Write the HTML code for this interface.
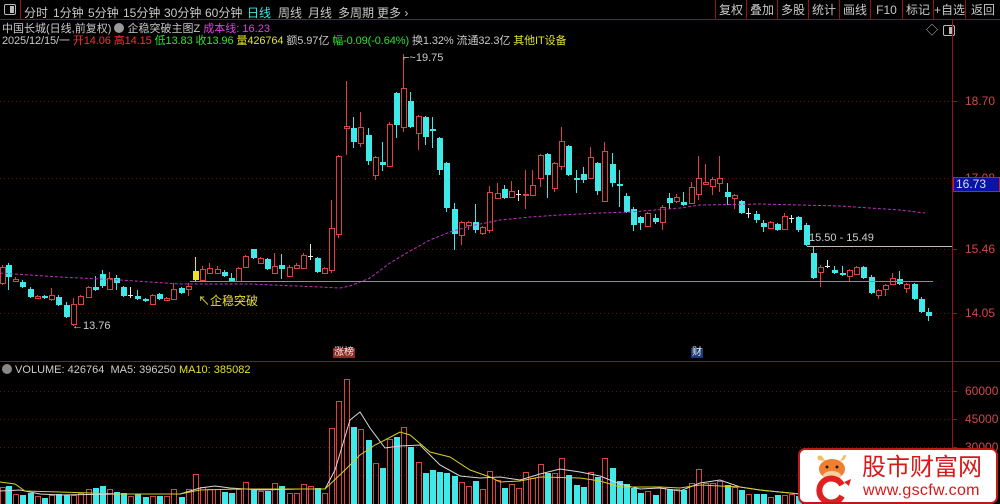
<!DOCTYPE html>
<html><head><meta charset="utf-8"><style>
*{margin:0;padding:0;box-sizing:border-box}
body{width:1000px;height:504px;background:#000;overflow:hidden;position:relative;font-family:"Liberation Sans","Noto Sans CJK SC",sans-serif;font-size:12px;color:#c8c8c8}
.a{position:absolute;white-space:nowrap;line-height:1}
#top{position:absolute;left:0;top:0;width:1000px;height:20px;border-bottom:1px solid #a01010}
.tab{position:absolute;top:4px;font-size:12px;color:#c8c8c8}
.btn{position:absolute;top:0;height:20px;border-left:1px solid #a01010;color:#c8c8c8;font-size:12px;text-align:center;line-height:21px}
</style></head><body>
<div id="top">
<div class="a" style="left:4px;top:4px;width:12px;height:11px;border:1px solid #bbb;border-radius:2px"><div style="position:absolute;right:1px;top:1px;width:4px;height:7px;background:#bbb"></div></div>
<div style="position:absolute;left:20px;top:0;width:1px;height:20px;background:#a01010"></div>
<span class="tab" style="left:24px">分时</span>
<span class="tab" style="left:53px">1分钟</span>
<span class="tab" style="left:88px">5分钟</span>
<span class="tab" style="left:123px">15分钟</span>
<span class="tab" style="left:164px">30分钟</span>
<span class="tab" style="left:205px">60分钟</span>
<span class="tab" style="left:247px;color:#3ce8e8">日线</span>
<span class="tab" style="left:278px">周线</span>
<span class="tab" style="left:308px">月线</span>
<span class="tab" style="left:338px">多周期</span>
<span class="tab" style="left:377px">更多 ›</span>
<div class="btn" style="left:715px;width:31px">复权</div>
<div class="btn" style="left:746px;width:31px">叠加</div>
<div class="btn" style="left:777px;width:31px">多股</div>
<div class="btn" style="left:808px;width:31px">统计</div>
<div class="btn" style="left:839px;width:31px">画线</div>
<div class="btn" style="left:870px;width:32px">F10</div>
<div class="btn" style="left:902px;width:31px">标记</div>
<div class="btn" style="left:933px;width:32px">+自选</div>
<div class="btn" style="left:965px;width:35px">返回</div>
</div>
<div class="a" style="left:2px;top:23px;font-size:11px">中国长城(日线,前复权) <span style="display:inline-block;width:10px;height:10px;border-radius:5px;background:#999;vertical-align:-1px"></span> 企稳突破主图Z <span style="color:#e040e0">成本线: 16.23</span></div>
<div class="a" style="left:2px;top:36px;font-size:11px;letter-spacing:-0.1px">2025/12/15/一 <span style="color:#ff3030">开14.06 高14.15</span> <span style="color:#30e030">低13.83 收13.96</span> <span style="color:#e0e030">量426764</span> 额5.97亿 <span style="color:#30e030">幅-0.09(-0.64%)</span> 换1.32% 流通32.3亿 <span style="color:#e0e030">其他IT设备</span></div>
<div class="a" style="left:926px;top:24px;color:#bbb;font-size:12px">◇</div>
<div class="a" style="left:943px;top:25px;width:12px;height:11px;border:1px solid #bbb;border-radius:2px"><div style="position:absolute;right:1px;top:1px;width:4px;height:7px;background:#bbb"></div></div>
<svg id="s" width="1000" height="504" style="position:absolute;left:0;top:0"></svg>
<div class="a" style="left:965px;top:95px;color:#d04848;font-size:12px">18.70</div>
<div class="a" style="left:965px;top:172px;color:#d04848;font-size:12px">17.08</div>
<div class="a" style="left:953px;top:177px;width:47px;height:15px;background:#0a12a8;border:1px solid #c02020;color:#ddd;font-size:12px;line-height:13px;padding-left:2px">16.73</div>
<div class="a" style="left:965px;top:243px;color:#d04848;font-size:12px">15.46</div>
<div class="a" style="left:965px;top:307px;color:#d04848;font-size:12px">14.05</div>
<div class="a" style="left:965px;top:385px;color:#d04848;font-size:12px">60000</div>
<div class="a" style="left:965px;top:413px;color:#d04848;font-size:12px">45000</div>
<div class="a" style="left:965px;top:441px;color:#d04848;font-size:12px">30000</div>
<div class="a" style="left:809px;top:233px;color:#ccc;font-size:11px">15.50 - 15.49</div>
<div class="a" style="left:72px;top:321px;color:#ccc;font-size:11px">←13.76</div>
<div class="a" style="left:403px;top:53px;color:#ccc;font-size:11px">⌐~19.75</div>
<div class="a" style="left:198px;top:295px;color:#e8e030;font-size:12px">↖企稳突破</div>
<div class="a" style="left:333px;top:348px;background:#8a2a20;color:#eee;font-size:10px;padding:0 1px">涨榜</div>
<div class="a" style="left:691px;top:348px;background:#1a3a7a;color:#eee;font-size:10px;padding:0 1px">财</div>
<div class="a" style="left:2px;top:364px;font-size:11px;color:#ccc"><span style="display:inline-block;width:10px;height:10px;border-radius:5px;background:#888;vertical-align:-1px"></span> VOLUME: 426764 &nbsp;MA5: 396250 <span style="color:#e0e030">MA10: 385082</span></div>
<div class="a" style="left:798px;top:448px;width:200px;height:56px;background:#fff;border:2px solid #c01818;border-radius:7px"></div>
<svg width="50" height="50" style="position:absolute;left:808px;top:452px" viewBox="0 0 50 50">
<path d="M10 8 Q8 2 14 4 L17 9 Z M36 8 Q40 2 36 3 L32 9 Z" fill="#f0c060"/>
<ellipse cx="24" cy="17" rx="13" ry="10" fill="#f08030"/>
<ellipse cx="24" cy="24" rx="9" ry="5" fill="#f8d0a0"/>
<circle cx="19" cy="15" r="1.5" fill="#222"/><circle cx="29" cy="15" r="1.5" fill="#222"/>
<path d="M34 33 A12 12 0 1 0 34 44" stroke="#e02020" stroke-width="6" fill="none"/>
<path d="M20 42 L27 35 L31 39 L40 30" stroke="#fff" stroke-width="2.5" fill="none"/>
<path d="M36 30 L43 27 L41 34 Z" fill="#e02020"/>
</svg>
<div class="a" style="left:862px;top:456px;color:#d81818;font-size:24px;letter-spacing:0px">股市财富网</div>
<div class="a" style="left:863px;top:483px;color:#d81818;font-size:16px;letter-spacing:0.3px">www.gscfw.com</div>
<script>
var s=document.getElementById('s'),h='';
function L(x1,y1,x2,y2,c,w,d){h+='<line x1="'+x1+'" y1="'+y1+'" x2="'+x2+'" y2="'+y2+'" stroke="'+c+'" stroke-width="'+(w||1)+'"'+(d?' stroke-dasharray="'+d+'"':'')+'/>';}
[101,178,249,313,391,419,447,475].forEach(function(y){L(0,y+.5,950,y+.5,'#6a1010',1,'1 3');});
L(952.5,20,952.5,504,'#a01010');L(0,361.5,1000,361.5,'#a01010');
[101,178,249,313,391,419,447].forEach(function(y){L(952,y+.5,957,y+.5,'#a01010');});
var C="2r267,283,265,285;8c265,277,263,290;15r279,281,277,282;22c282,287,280,288;30c289,297,287,298;37r296,298,295,299;44c296,298,295,299;51r295,299,288,301;58c297,305,295,306;66c305,317,302,318;73r304,324,298,326;80r296,304,295,305;88r287,297,286,298;95c287,290,276,291;102c274,286,270,288;109r278,289,272,290;116c278,283,275,290;123c287,296,286,297;130w295,296,287,298;137c296,299,290,300;145c299,301,298,302;152r295,304,294,305;159c294,299,293,300;166r298,300,297,301;173r289,299,283,300;181c288,293,287,294;188r286,289,283,296;195y271,280,257,281;202r269,280,266,281;209r268,273,263,274;217r269,273,266,274;224c272,276,270,277;231c278,281,273,282;238r268,281,267,282;245r256,267,255,268;253c249,258,249,259;260r258,263,257,264;267c259,269,258,270;274r266,273,253,274;281c265,269,254,279;289r267,276,265,277;296r265,268,263,269;303r255,268,253,269;310w256,258,244,260;317c258,272,257,273;324r268,273,267,274;331r228,270,200,273;338r156,234,155,238;346r126,128,81,155;353c128,142,117,148;360r127,143,112,147;368c135,161,128,165;375r157,175,156,180;382c162,165,142,171;389r124,166,122,167;396c93,125,92,138;403r88,127,54,132;410c101,127,92,128;418r116,133,115,150;425c117,137,116,145;432c129,131,117,148;439c138,170,137,175;446c163,208,162,212;454c209,234,203,250;461r222,235,221,245;468r222,225,221,230;475c222,230,204,233;482r227,233,226,235;489r192,230,186,233;497r193,198,183,199;504c189,198,185,199;511r191,197,181,198;518w194,195,190,201;525r194,195,170,209;532r185,195,170,196;540r155,178,154,187;547c154,175,153,198;554r163,188,162,192;561r141,166,127,170;568c146,175,145,176;576c178,180,170,193;583c174,180,167,183;590r157,178,147,179;597c163,191,162,195;604r151,201,142,202;612c164,183,153,187;619c184,186,170,207;626c196,212,193,213;633c209,225,207,231;640c217,223,216,230;647r213,226,212,227;655c218,222,214,224;662r207,222,205,230;669c198,203,193,209;676r197,201,194,203;683c202,205,192,206;691r187,203,182,204;698r178,194,156,200;705r182,184,164,185;712r179,186,177,195;719r178,183,156,192;727c192,197,183,205;734r195,198,194,209;741c201,213,200,214;748w213,214,208,218;756c214,220,211,223;763c223,227,220,232;770r222,228,221,229;777c224,230,223,231;784r216,229,213,230;791w218,219,215,223;798c217,230,216,232;806c225,245,223,246;813c253,278,247,279;820r267,272,265,287;827w266,267,260,268;834c270,273,266,274;842c273,275,266,276;849r270,276,269,281;856r267,274,266,275;863c267,278,266,279;871c277,293,275,294;878r290,295,289,299;885r285,289,284,296;892r278,284,273,285;899c279,284,271,285;906r284,288,283,293;914c284,299,283,300;921c299,312,297,313;928c312,316,308,321";
var V="2:487,8:486,16:494,23:495,30:493,37:496,44:498,52:495,59:494,66:495,73:495,80:493,88:489,95:488,102:486,109:489,116:492,124:493,131:496,138:494,145:497,152:496,159:496,167:496,174:489,181:497,188:489,195:474,202:487,209:489,217:489,224:492,231:493,238:489,246:482,253:489,260:491,267:491,274:483,282:486,289:493,296:493,303:484,310:486,317:488,324:493,332:428,338:401,346:379,353:427,360:429,367:440,375:463,382:468,389:439,396:437,403:427,411:447,418:462,425:473,432:470,439:472,446:473,454:476,461:482,468:486,476:481,483:489,490:471,497:480,503:488,511:484,518:488,525:472,533:478,540:464,547:473,554:473,562:458,569:475,576:485,583:487,590:472,597:477,605:458,612:468,619:481,626:484,633:488,641:493,648:491,655:495,662:488,670:489,677:489,684:490,691:483,698:469,705:483,713:483,720:481,727:485,734:487,742:490,749:494,756:494,763:494,770:497,778:495,785:495,792:494".split(',').map(function(p){return p.split(':').map(Number);});
function vol(x){var b=496,d=9;V.forEach(function(p){var e=Math.abs(p[0]-x);if(e<d){d=e;b=p[1];}});return b;}
var col={r:'#e04040',c:'#40e8e8',y:'#f0e020',w:'#e8e8e8'};
C.split(';').forEach(function(t){var m=t.match(/^(\d+)([rcyw])(.*)$/),x=+m[1],k=m[2],v=m[3].split(',').map(Number),c=col[k];
L(x+.5,v[2],x+.5,v[3],c);
if(k=='w'){L(x-2,v[0]+.5,x+3,v[0]+.5,c);}
else if(k=='r'){h+='<rect x="'+(x-2+.5)+'" y="'+(v[0]+.5)+'" width="5" height="'+Math.max(1,v[1]-v[0])+'" fill="#000" stroke="'+c+'"/>';}
else{h+='<rect x="'+(x-2)+'" y="'+v[0]+'" width="6" height="'+Math.max(2,v[1]-v[0])+'" fill="'+c+'"/>';}
var vt=vol(x);var vc=(k=='c')?'#40e8e8':'#e04040';
if(x>795&&vt<496)vt=496;
if(k=='c')h+='<rect x="'+(x-2)+'" y="'+vt+'" width="6" height="'+(504-vt)+'" fill="'+vc+'"/>';
else h+='<rect x="'+(x-2+.5)+'" y="'+(vt+.5)+'" width="5" height="'+(504-vt)+'" fill="none" stroke="'+vc+'"/>';
});
function P(pts,c,d,w){h+='<polyline points="'+pts+'" fill="none" stroke="'+c+'" stroke-width="'+(w||1)+'"'+(d?' stroke-dasharray="'+d+'"':'')+'/>';}
P("0,273 60,277 120,280 180,284 250,284 320,287 340,288 350,286 370,278 390,263 410,251 430,240 450,232 470,226 500,220 530,217 560,215 600,213 630,212 680,208 700,205 760,204 800,205 840,206 870,208 900,210 925,213","#c030c0","3 2");
L(190,281.5,933,281.5,'#30d030');
L(807,246.5,952,246.5,'#bbb');
P("0,491 20,490 40,494 60,495 120,494 180,494 200,488 215,486 230,488 260,490 300,489 325,489 335,470 350,420 360,412 370,428 385,448 400,446 420,445 440,465 460,476 480,478 500,477 520,480 540,474 560,469 580,472 600,476 620,484 640,489 660,488 680,491 700,483 720,480 740,487 760,490 780,492 800,494 830,497","#d8d8d8");
P("0,482 15,484 25,491 60,492 120,494 180,494 200,490 240,489 325,489 345,470 360,455 375,445 385,440 400,432 410,435 430,452 450,457 470,470 490,477 500,482 520,481 540,477 580,478 600,481 620,487 660,487 680,488 700,485 740,487 760,490 800,494","#d8d020");
s.innerHTML=h;
</script>
</body></html>
